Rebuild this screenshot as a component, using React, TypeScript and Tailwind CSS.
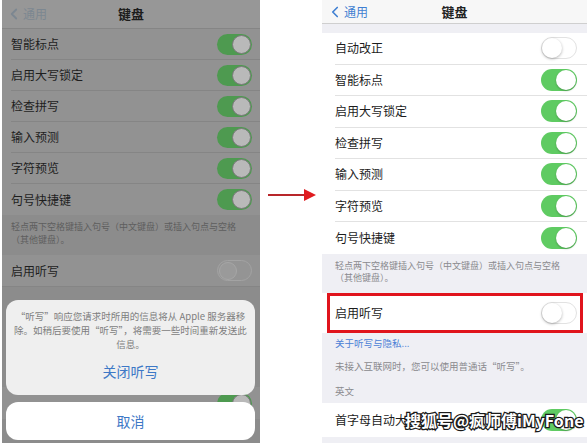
import { ChevronLeft } from "lucide-react";

const FONT = "font-['Noto_Sans_CJK_SC','Noto_Sans',sans-serif]";

function Toggle({ on, dim = false }: { on: boolean; dim?: boolean }) {
  if (dim) {
    return on ? (
      <div className="flex h-[21px] w-[35px] items-center justify-end rounded-full bg-[#4e9a50] pr-[1px]">
        <div className="h-[19px] w-[19px] rounded-full border border-[#7a7a7a] bg-[#b9b9b9]" />
      </div>
    ) : (
      <div className="flex h-[21px] w-[35px] items-center rounded-full border border-[#a3a3a3] bg-[#949494] pl-[1px]">
        <div className="h-[18px] w-[18px] rounded-full border border-[#a6a6a6] bg-[#9a9a9a]" />
      </div>
    );
  }
  return on ? (
    <div className="flex h-[22px] w-[36px] items-center justify-end rounded-full bg-[#5fcb62] pr-[1px]">
      <div className="h-[20px] w-[20px] rounded-full bg-white shadow-[0_1px_2px_rgba(0,0,0,0.25)]" />
    </div>
  ) : (
    <div className="flex h-[22px] w-[36px] items-center rounded-full border border-[#e2e2e2] bg-white">
      <div className="h-[20px] w-[20px] rounded-full bg-white shadow-[0_1px_3px_rgba(0,0,0,0.3)]" />
    </div>
  );
}

const leftRows = ["智能标点", "启用大写锁定", "检查拼写", "输入预测", "字符预览", "句号快捷键"];
const rightRows: [string, boolean][] = [
  ["自动改正", false],
  ["智能标点", true],
  ["启用大写锁定", true],
  ["检查拼写", true],
  ["输入预测", true],
  ["字符预览", true],
  ["句号快捷键", true],
];

function LeftPanel() {
  return (
    <div className="relative ml-[2px] h-[443px] w-[258px] overflow-hidden bg-[#8c8c8c]">
      {/* Nav */}
      <div className="relative flex h-[29px] items-center border-b border-[#858585] bg-[#979797]">
        <div className="flex items-center pl-[3px] text-[#7c8791]">
          <ChevronLeft size={18} strokeWidth={2.4} />
          <span className="text-[12px]">通用</span>
        </div>
        <div className="absolute inset-x-0 text-center text-[13px] font-bold text-[#1c1c1c]">键盘</div>
      </div>

      {/* Rows */}
      <div className="bg-[#929292]">
        {leftRows.map((r, i) => (
          <div key={r} className="pl-[9px]">
            <div
              className={
                i === leftRows.length - 1
                  ? "flex h-[31px] items-center justify-between pr-[8px]"
                  : "flex h-[31px] items-center justify-between border-b border-[#858585] pr-[8px]"
              }
            >
              <span className="text-[12px] text-[#1e1e1e]">{r}</span>
              <Toggle on dim />
            </div>
          </div>
        ))}
      </div>

      {/* Footer */}
      <div className="px-[9px] pb-[9px] pt-[5px] text-[9px] leading-[13px] text-[#5e5e5e]">
        <p>轻点两下空格键插入句号（中文键盘）或插入句点与空格</p>
        <p>（其他键盘）。</p>
      </div>

      <div className="flex h-[32px] items-center justify-between border-b border-[#858585] bg-[#929292] pl-[9px] pr-[8px]">
        <span className="text-[12px] text-[#1e1e1e]">启用听写</span>
        <Toggle on={false} dim />
      </div>

      <div className="h-[100px]" />

      <div className="flex h-[32px] items-center justify-end bg-[#929292] pr-[8px]">
        <Toggle on dim />
      </div>

      {/* Action sheet */}
      <div className="absolute left-[4px] right-[5px] top-[300px] flex flex-col gap-[7px]">
        <div className="h-[95px] rounded-[12px] bg-[#efefef]">
          <div className="whitespace-nowrap pt-[9px] text-center text-[9.5px] leading-[14px] text-[#7d7d7d]">
            <p>“听写”响应您请求时所用的信息将从 Apple 服务器移</p>
            <p>除。如稍后要使用“听写”，将需要一些时间重新发送此</p>
            <p>信息。</p>
          </div>
          <div className="mt-[10px] text-center text-[14px] text-[#3d78c6]">关闭听写</div>
        </div>
        <div className="flex h-[38px] items-center justify-center rounded-[12px] bg-white text-[14px] text-[#3d78c6]">
          取消
        </div>
      </div>
    </div>
  );
}

function Arrow() {
  return (
    <div className="w-[62px] pt-[188px]">
      <svg width="62" height="14" viewBox="0 0 62 14">
        <line x1="8" y1="7" x2="46" y2="7" stroke="#b8262a" strokeWidth="2" />
        <polygon points="44,1 56,7 44,13" fill="#e01b1f" />
      </svg>
    </div>
  );
}

function RightPanel() {
  return (
    <div className="relative h-[443px] w-[265px] overflow-hidden bg-[#efeff4]">
      {/* Nav */}
      <div className="relative flex h-[24px] items-center border-b border-[#cfcfcf] bg-[#f7f7f7]">
        <div className="flex items-center pl-[4px] text-[#3f7fd2]">
          <ChevronLeft size={18} strokeWidth={2.2} />
          <span className="text-[12px]">通用</span>
        </div>
        <div className="absolute inset-x-0 text-center text-[13px] font-bold text-[#222]">键盘</div>
      </div>
      <div className="h-[9px]" />

      {/* Rows */}
      <div className="bg-white">
        {rightRows.map(([r, on], i) => (
          <div key={r} className="pl-[13px]">
            <div
              className={
                i === rightRows.length - 1
                  ? "flex h-[31.5px] items-center justify-between pr-[10px]"
                  : "flex h-[31.5px] items-center justify-between border-b border-[#e2e2e2] pr-[10px]"
              }
            >
              <span className="text-[12px] text-[#1c1c1c]">{r}</span>
              <Toggle on={on} />
            </div>
          </div>
        ))}
      </div>

      <div className="px-[13px] pb-[8px] pt-[6px] text-[9px] leading-[12.5px] text-[#8a8a8e]">
        <p>轻点两下空格键插入句号（中文键盘）或插入句点与空格</p>
        <p>（其他键盘）。</p>
      </div>

      {/* Highlighted row */}
      <div className="bg-white pl-[5px] pr-[4px]">
        <div className="flex h-[40px] items-center justify-between border-[3px] border-[#e0141c] pl-[5px] pr-[3px]">
          <span className="text-[12px] text-[#1c1c1c]">启用听写</span>
          <Toggle on={false} />
        </div>
      </div>

      <div className="px-[13px] text-[9.5px] text-[#8a8a8e]">
        <p className="pt-[4px] leading-[13px] text-[#4a80d6]">关于听写与隐私...</p>
        <p className="pt-[10px] leading-[13px]">未接入互联网时，您可以使用普通话“听写”。</p>
        <p className="pb-[5px] pt-[12px] leading-[13px]">英文</p>
      </div>

      <div className="flex h-[34px] items-center justify-between bg-white pl-[13px] pr-[10px]">
        <span className="text-[12px] text-[#1c1c1c]">首字母自动大写</span>
        <Toggle on />
      </div>

      {/* Watermark */}
      <div className="absolute left-[83px] top-[408px] whitespace-nowrap text-[16px] font-bold text-white [-webkit-text-stroke:2.5px_#1a1a1a] [paint-order:stroke_fill]">
        搜狐号@疯师傅iMyFone
      </div>
    </div>
  );
}

export default function App() {
  return (
    <div className={`flex h-[443px] w-[587px] bg-white ${FONT}`}>
      <LeftPanel />
      <Arrow />
      <RightPanel />
    </div>
  );
}
